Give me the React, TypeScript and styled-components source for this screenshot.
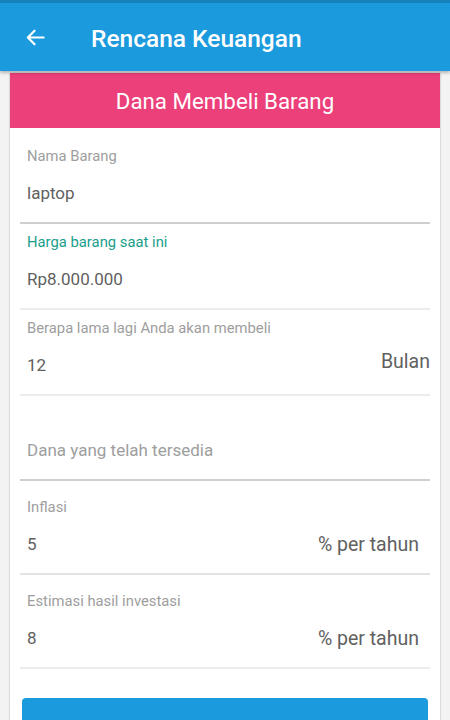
import styled, { createGlobalStyle } from "styled-components";

const GlobalStyle = createGlobalStyle`
  html, body {
    margin: 0;
    padding: 0;
    background: #f3f3f3;
    font-family: Roboto, "Noto Sans", "Liberation Sans", sans-serif;
  }
`;

const Page = styled.div`
  width: 450px;
  height: 720px;
  overflow: hidden;
  background: #f3f3f3;
`;

const StatusBar = styled.div`
  height: 3px;
  background: #1582bd;
`;

const AppBar = styled.div`
  height: 68px;
  background: #1b9add;
  display: flex;
  align-items: center;
  padding-left: 24px;
  box-shadow: 0 2px 3px rgba(0, 0, 0, 0.25);
  position: relative;
  z-index: 1;

  h1 {
    margin: 2px 0 0 44px;
    font-size: 24.5px;
    font-weight: 500;
    color: #fff;
  }
`;

const BackIcon = styled.svg`
  width: 23px;
  height: 23px;
  display: block;
`;

const Card = styled.div`
  margin: 2px 10px 0;
  background: #fff;
  box-shadow: 0 0 2px rgba(0, 0, 0, 0.3);
`;

const CardHeader = styled.div`
  height: 55px;
  background: #ec407a;
  color: #fff;
  font-size: 22.3px;
  display: flex;
  align-items: center;
  justify-content: center;
`;

const Body = styled.div`
  padding: 0 10px 20px;
`;

const Field = styled.div<{ $top: number; $line: string }>`
  padding: ${(p) => p.$top}px 7px 11px;
  border-bottom: 2px solid ${(p) => p.$line};
`;

const Label = styled.div<{ $active?: boolean }>`
  height: 18px;
  line-height: 18px;
  font-size: 14.8px;
  color: ${(p) => (p.$active ? "#1a9e8c" : "#9e9e9e")};
  margin-bottom: 10px;
`;

const ValueRow = styled.div`
  height: 36px;
  display: flex;
  align-items: center;
  justify-content: space-between;
`;

const Value = styled.span<{ $placeholder?: boolean }>`
  font-size: 17px;
  color: ${(p) => (p.$placeholder ? "#9e9e9e" : "#5f5f5f")};
`;

const Unit = styled.span<{ $shift: number; $lift?: number }>`
  font-size: 19.5px;
  color: #616161;
  margin-right: ${(p) => p.$shift}px;
  margin-top: ${(p) => -(p.$lift ?? 0)}px;
`;

const Button = styled.button`
  display: block;
  width: 406px;
  height: 48px;
  margin: 29px 0 0 2px;
  border: none;
  border-radius: 4px;
  background: #1b9add;
`;

const App = () => {
  return (
    <Page>
      <GlobalStyle />
      <StatusBar />
      <AppBar>
        <BackIcon viewBox="0 0 24 24">
          <path
            d="M20.5 12H4M11 5l-7 7 7 7"
            fill="none"
            stroke="#fff"
            strokeWidth="2.3"
            strokeLinecap="round"
            strokeLinejoin="round"
          />
        </BackIcon>
        <h1>Rencana Keuangan</h1>
      </AppBar>
      <Card>
        <CardHeader>Dana Membeli Barang</CardHeader>
        <Body>
          <Field $top={19} $line="#cfcfcf">
            <Label>Nama Barang</Label>
            <ValueRow>
              <Value>laptop</Value>
            </ValueRow>
          </Field>
          <Field $top={9} $line="#ececec">
            <Label $active>Harga barang saat ini</Label>
            <ValueRow>
              <Value>Rp8.000.000</Value>
            </ValueRow>
          </Field>
          <Field $top={9} $line="#ececec">
            <Label>Berapa lama lagi Anda akan membeli</Label>
            <ValueRow>
              <Value>12</Value>
              <Unit $shift={-7} $lift={7}>Bulan</Unit>
            </ValueRow>
          </Field>
          <Field $top={36} $line="#cfcfcf">
            <ValueRow>
              <Value $placeholder>Dana yang telah tersedia</Value>
            </ValueRow>
          </Field>
          <Field $top={17} $line="#e3e3e3">
            <Label>Inflasi</Label>
            <ValueRow>
              <Value>5</Value>
              <Unit $shift={4}>% per tahun</Unit>
            </ValueRow>
          </Field>
          <Field $top={17} $line="#ececec">
            <Label>Estimasi hasil investasi</Label>
            <ValueRow>
              <Value>8</Value>
              <Unit $shift={4}>% per tahun</Unit>
            </ValueRow>
          </Field>
          <Button />
        </Body>
      </Card>
    </Page>
  );
};

export default App;
